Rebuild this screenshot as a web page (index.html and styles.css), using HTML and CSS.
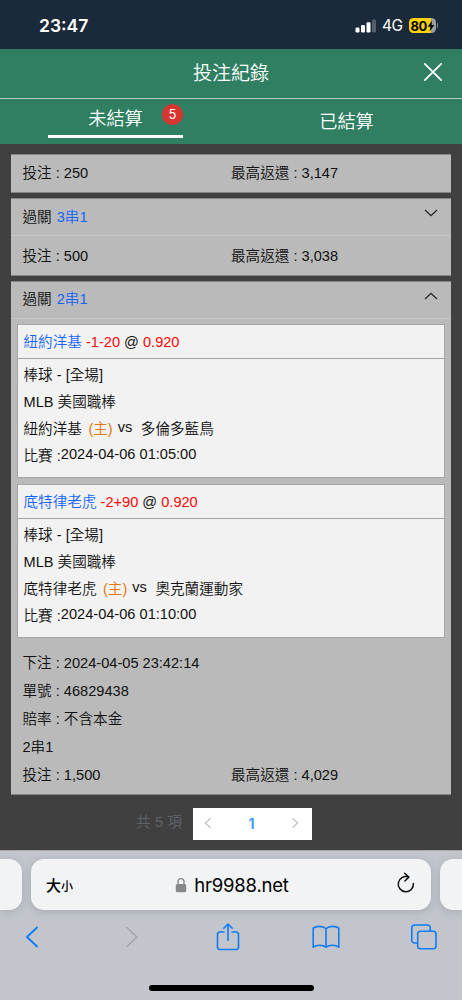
FILE: index.html
```html
<!DOCTYPE html>
<html lang="zh-Hant">
<head>
<meta charset="utf-8">
<meta name="viewport" content="width=device-width">
<title>投注紀錄</title>
<link rel="stylesheet" href="styles.css">
</head>
<body>
<div class="phone">
  <div class="status">
    <span class="clock">23:47</span>
    <svg class="signal" width="22" height="14" viewBox="0 0 22 14"><g fill="#fff"><rect x="0.5" y="8.5" width="4" height="5" rx="1.2"/><rect x="6" y="6" width="4" height="7.5" rx="1.2"/><rect x="11.5" y="3.2" width="4" height="10.3" rx="1.2"/><rect x="17" y="0.5" width="4" height="13" rx="1.2" opacity=".25"/></g></svg>
    <span class="net">4G</span>
    <span class="battery"><span class="level">80</span><svg class="bolt" width="8" height="12" viewBox="0 0 8 12"><path d="M5 .5.6 6.800h2.800L2.600 11.500 7.400 5H4.500z" fill="#000"/></svg></span>
    <i class="nub"></i>
  </div>
  <header class="title">
    <h1>投注紀錄</h1>
    <svg class="close" width="20" height="20" viewBox="0 0 20 20"><path d="M1.800 1.800 18.200 18.200M18.200 1.800 1.800 18.200" stroke="#fff" stroke-width="1.700" stroke-linecap="round"/></svg>
  </header>
  <nav class="tabs">
    <div class="tab active"><span class="label">未結算</span><span class="badge">5</span></div>
    <div class="tab"><span class="label">已結算</span></div>
  </nav>
  <main>
    <section class="card">
      <div class="sum"><span>投注 : 250</span><span>最高返還 : 3,147</span></div>
    </section>
    <section class="card">
      <div class="head"><span>過關</span><b>3串1</b><svg class="chev" width="14" height="8" viewBox="0 0 14 8"><path d="M1 1l6 5.700L13 1"/></svg></div>
      <div class="sum second"><span>投注 : 500</span><span>最高返還 : 3,038</span></div>
    </section>
    <section class="card open">
      <div class="head"><span>過關</span><b>2串1</b><svg class="chev" width="14" height="8" viewBox="0 0 14 8"><path d="M1 7l6-5.700L13 7"/></svg></div>
      <div class="bets">
        <article class="bet">
          <div class="pick"><span class="team">紐約洋基</span> <span class="odds">-1-20</span> @ <span class="odds">0.920</span></div>
          <div class="info">
            <p>棒球 - [全場]</p>
            <p>MLB 美國職棒</p>
            <p class="match"><span>紐約洋基</span><span class="home">(主)</span><span class="vs">vs</span><span>多倫多藍鳥</span></p>
            <p class="time"><span>比賽 :</span><span class="date">2024-04-06 01:05:00</span></p>
          </div>
        </article>
        <article class="bet">
          <div class="pick"><span class="team">底特律老虎</span> <span class="odds">-2+90</span> @ <span class="odds">0.920</span></div>
          <div class="info">
            <p>棒球 - [全場]</p>
            <p>MLB 美國職棒</p>
            <p class="match"><span>底特律老虎</span><span class="home">(主)</span><span class="vs">vs</span><span>奧克蘭運動家</span></p>
            <p class="time"><span>比賽 :</span><span class="date">2024-04-06 01:10:00</span></p>
          </div>
        </article>
      </div>
      <div class="detail">
        <p>下注 : 2024-04-05 23:42:14</p>
        <p>單號 : 46829438</p>
        <p>賠率 : 不含本金</p>
        <p>2串1</p>
        <p class="cols"><span>投注 : 1,500</span><span>最高返還 : 4,029</span></p>
      </div>
    </section>
    <div class="pager">
      <span class="total">共 5 項</span>
      <div class="pages">
        <svg width="8" height="12" viewBox="0 0 8 12"><path d="M6.500 1.200 1.500 6l5 4.800"/></svg>
        <span>1</span>
        <svg width="8" height="12" viewBox="0 0 8 12"><path d="M1.500 1.200 6.500 6l-5 4.800"/></svg>
      </div>
    </div>
  </main>
  <footer class="browser">
    <div class="addresses">
      <div class="side left"></div>
      <div class="address">
        <span class="aa">大<small>小</small></span>
        <span class="url"><svg width="12" height="16" viewBox="0 0 12 16"><path d="M3 8V4.600a3 3 0 0 1 6 0V8" fill="none" stroke="#87888c" stroke-width="1.400"/><rect x=".8" y="7" width="10.400" height="8.300" rx="1.500" fill="#87888c"/></svg>hr9988.net</span>
        <svg class="reload" width="20" height="22" viewBox="0 0 20 22"><path d="M12.200 4.900A7.600 7.600 0 1 0 17.400 11.500M8.600 1.200l4.300 3.900-4.100 3.900" fill="none" stroke="#111" stroke-width="1.500" stroke-linecap="round" stroke-linejoin="round"/></svg>
      </div>
      <div class="side right"></div>
    </div>
    <div class="tools">
      <svg width="28" height="22" viewBox="0 0 14 22"><path d="M12 1.500 2 11l10 9.500" stroke-width="1.900"/></svg>
      <svg class="off" width="28" height="22" viewBox="-2 0 14 22"><path d="M2 1.500 12 11 2 20.500"/></svg>
      <svg width="28" height="28" viewBox="0 0 24 28"><path d="M8 9H4a2.500 2.500 0 0 0-2.500 2.500V24A2.500 2.500 0 0 0 4 26.500H20A2.500 2.500 0 0 0 22.500 24V11.500A2.500 2.500 0 0 0 20 9H16M12 17.500V1.200M7.800 5.200 12 1l4.200 4.200"/></svg>
      <svg width="28" height="24" viewBox="0 0 28 24"><path d="M14 3.700C10.800.600 4.300.700 1.200 3.200V22.200C4.500 19.600 10.600 19.500 14 22.200 17.400 19.500 23.500 19.600 26.800 22.200V3.200C23.700.700 17.200.600 14 3.700ZM14 3.700V22"/></svg>
      <svg width="28" height="26" viewBox="0 0 27 26"><path d="M7 19H4A2.700 2.700 0 0 1 1.300 16.300V3.700A2.700 2.700 0 0 1 4 1H17A2.700 2.700 0 0 1 19.700 3.700V7"/><rect x="7.200" y="7.200" width="18.300" height="17.600" rx="2.700"/></svg>
    </div>
    <div class="homebar"></div>
  </footer>
</div>
</body>
</html>
```

FILE: styles.css
```css
* { box-sizing: border-box; }
body { margin: 0; font-family: "Liberation Sans", "Noto Sans CJK TC", sans-serif; font-size: 14.6px; font-weight: 350; color: #111; }
h1, p { margin: 0; font-weight: 350; }
svg { display: block; flex: none; }
.phone { width: 462px; height: 1000px; display: flex; flex-direction: column; background: #404040; overflow: hidden; }

.status { height: 49px; background: #1b2a3a; display: flex; align-items: center; padding: 2px 24px 0 39px; color: #fff; font-family: Inter, sans-serif; font-weight: 400; }
.clock { font-size: 17.5px; font-weight: 600; flex: 1; }
.net { font-size: 15.5px; line-height: 20px; margin: 1px 6px 0 5px; letter-spacing: -0.5px; }
.battery { width: 27px; height: 15px; border-radius: 4.5px; background: linear-gradient(90deg, #fdd20a 80%, #9a9fa5 80%); display: flex; align-items: center; padding-left: 2px; color: #000; }
.level { font-size: 13px; font-weight: 700; letter-spacing: -0.4px; }
.nub { width: 1.5px; height: 5px; border-radius: 0 2px 2px 0; background: #77818b; margin-left: 1px; }

.title { height: 49px; background: #307f63; display: flex; align-items: center; justify-content: center; padding: 0 19px 3px 39px; }
.title h1 { flex: 1; text-align: center; color: #fff; font-size: 19px; line-height: 28px; padding-top: 3px; }
.close { margin-top: -1px; }
.tabs { height: 46px; background: #307f63; border-top: 1px solid #b9c9c2; display: flex; color: #fff; }
.tab { width: 231px; display: flex; justify-content: center; position: relative; font-size: 18.2px; line-height: 26px; padding-top: 10px; }
.active { width: 135px; margin: 0 48px; height: 39px; border-bottom: 3px solid #fff; padding-top: 7px; }
.badge { position: absolute; right: 0; top: 5px; width: 21px; height: 21px; border-radius: 50%; background: #d63530; font: 13px/21px Inter, sans-serif; text-align: center; }

main { height: 706px; padding: 10px 11px 0; display: flex; flex-direction: column; gap: 5px; }
.card { background: #bababa; border-top: 1px solid #868686; border-bottom: 1px solid #868686; }
.sum { height: 37px; line-height: 37px; display: grid; grid-template-columns: 208.5px 1fr; padding-left: 11.5px; }
.sum.second { height: 39px; line-height: 40px; }
.head { height: 37px; line-height: 36px; border-bottom: 1px solid #c8c8c8; display: flex; gap: 5px; padding: 0 13px 0 11.5px; }
.head b { font-weight: inherit; color: #1565fa; flex: 1; }
.chev { margin-top: 10px; fill: none; stroke: #222; stroke-width: 1.2; }
.open { height: 514px; }
.open .head { line-height: 35px; }
.bets { padding: 5px 6px 0; display: flex; flex-direction: column; gap: 6px; }
.bet { height: 154px; background: #f2f2f2; border: 1px solid #a6a6a6; }
.pick { height: 34px; line-height: 34px; padding-left: 5.5px; border-bottom: 1px solid #a3a3a3; white-space: pre; }
.team { color: #1565fa; }
.odds { color: #fb0808; }
.info { padding: 3px 5.5px 0; line-height: 27px; }
.match { display: flex; }
.home { color: #e1770f; margin-left: 6.5px; }
.vs { margin: -2px 8.5px 0 5px; }
.time { display: flex; }
.date { margin-top: -2px; }
.detail { padding: 11px 0 0 11.5px; line-height: 28px; }
.cols { display: grid; grid-template-columns: 208.5px 1fr; }

.pager { display: flex; margin: 8px 139px 0 125px; justify-content: space-between; color: #60636a; height: 32px; }
.total { font-size: 14.5px; line-height: 29px; letter-spacing: .2px; }
.pages { width: 119px; height: 32px; background: #fff; display: flex; align-items: center; justify-content: space-between; padding: 0 13px 2px 11px; color: #409eff; font: 700 14px Inter, sans-serif; }
.pages svg { fill: none; stroke: #bfc4cd; stroke-width: 1.3; }

.browser { height: 150px; background: #c2c6cc; display: flex; flex-direction: column; align-items: center; border-top: 1px solid #a5a8ac; }
.addresses { width: 462px; display: flex; gap: 9px; margin-top: 8px; }
.address { width: 400px; height: 51px; border-radius: 13px; background: #f2f3f5; box-shadow: 0 2px 9px rgba(60, 65, 75, .2); display: grid; grid-template-columns: 60px 1fr 60px; align-items: center; padding: 0 15px; color: #000; }
.side { flex: 1; height: 51px; background: #f2f3f5; box-shadow: 0 2px 9px rgba(60, 65, 75, .2); }
.left { border-radius: 0 13px 13px 0; }
.right { border-radius: 13px 0 0 13px; }
.aa { font: 500 15px "Noto Sans CJK TC", sans-serif; }
.aa small { font-size: 12px; }
.url { display: flex; justify-content: center; align-items: center; gap: 7px; padding-left: 2px; font: 18.5px Inter, sans-serif; letter-spacing: -.2px; }
.reload { justify-self: end; margin-bottom: 3px; }
.tools { width: 462px; display: flex; justify-content: space-between; align-items: center; height: 30px; margin-top: 12px; padding: 0 24px 0 18px; }
.tools svg { fill: none; stroke: #117cf5; stroke-width: 1.6; stroke-linecap: round; stroke-linejoin: round; }
.tools .off { stroke: #a0a3a8; }
.homebar { width: 165px; height: 6px; border-radius: 3px; background: #000; margin-top: 33px; }
```
